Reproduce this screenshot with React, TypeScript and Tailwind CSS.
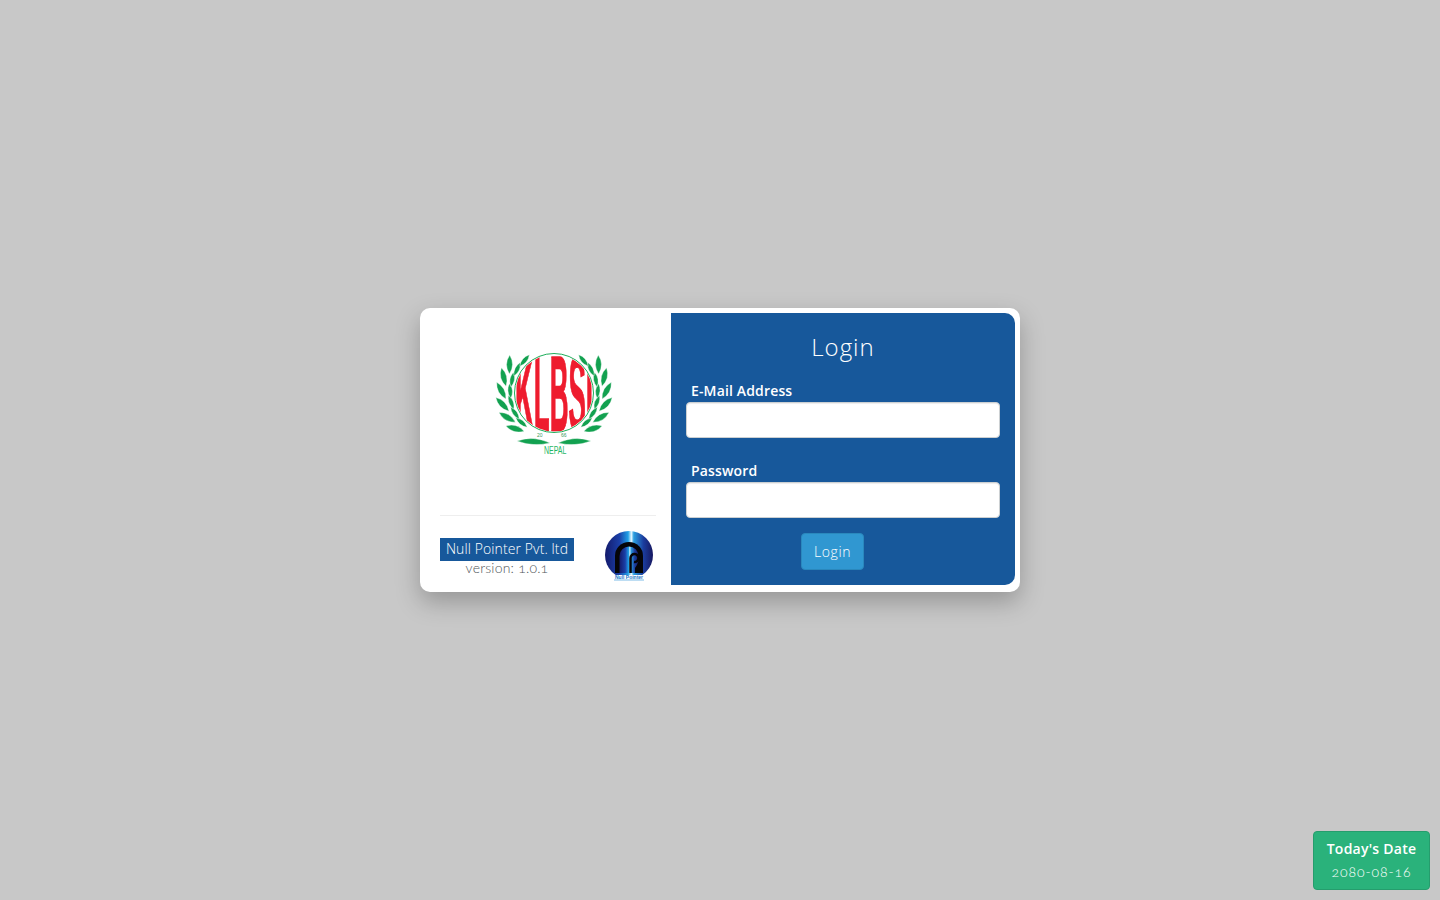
import React from 'react';

// laurel leaves of one branch, mirrored for the other side
const leaf = (x: number, y: number, deg: number, len: number, wid: number) => {
  const r = (deg * Math.PI) / 180;
  const ex = x + Math.cos(r) * len;
  const ey = y + Math.sin(r) * len;
  const mx = (x + ex) / 2;
  const my = (y + ey) / 2;
  const nx = -Math.sin(r) * wid;
  const ny = Math.cos(r) * wid;
  return `M${x.toFixed(1)} ${y.toFixed(1)}Q${(mx + nx).toFixed(1)} ${(my + ny).toFixed(1)} ${ex.toFixed(1)} ${ey.toFixed(1)}Q${(mx - nx).toFixed(1)} ${(my - ny).toFixed(1)} ${x.toFixed(1)} ${y.toFixed(1)}Z`;
};

const branch = () => {
  const cx = 554;
  const cy = 393;
  const out: string[] = [];
  for (let a = 38; a <= 130; a += 15) {
    const t = ((90 + a) * Math.PI) / 180;
    const tangent = 90 + a + 90;
    if (a <= 115) {
      const ox = cx + Math.cos(t) * 48.5;
      const oy = cy + Math.sin(t) * 48.5;
      out.push(leaf(ox, oy, tangent - 22, 19, 6));
    }
    const ix = cx + Math.cos(t) * 43.5;
    const iy = cy + Math.sin(t) * 43.5;
    out.push(leaf(ix, iy, tangent + 2, 15, 4.5));
  }
  return out;
};

const KlbsiLogo = () => {
  const leaves = branch();
  return (
    <svg viewBox="490 345 130 115" className="w-[130px] h-[115px]">
      <defs>
        <clipPath id="seal">
          <circle cx="554" cy="393" r="38.5" />
        </clipPath>
      </defs>
      <g clipPath="url(#seal)">
        <text
          transform="translate(515 431) scale(0.241 1)"
          fill="#ee1c2e"
          stroke="#ee1c2e"
          strokeWidth="1.500"
          fontFamily="'Liberation Sans', sans-serif"
          fontWeight="700"
          fontSize="108"
        >
          KLBSI
        </text>
      </g>
      <circle cx="554" cy="393" r="39.5" fill="none" stroke="#1fae5b" strokeWidth="1" />
      <g fill="#12a150" stroke="#ffffff" strokeWidth="0.4">
        {leaves.map((d, i) => (
          <path key={i} d={d} />
        ))}
        <g transform="translate(1108 0) scale(-1 1)">
          {leaves.map((d, i) => (
            <path key={i} d={d} />
          ))}
        </g>
        <path d="M517 441Q533 435 550 443Q533 447 517 441Z" />
        <path d="M591 441Q575 435 558 443Q575 447 591 441Z" />
      </g>
      <text x="537" y="437" fill="#3a9a5c" fontSize="5" fontFamily="'Liberation Sans', sans-serif">
        20
      </text>
      <text x="561" y="437" fill="#3a9a5c" fontSize="5" fontFamily="'Liberation Sans', sans-serif">
        66
      </text>
      <text
        transform="translate(544 454) scale(0.7 1)"
        fill="#1fb765"
        fontSize="10"
        fontFamily="'Liberation Sans', sans-serif"
      >
        NEPAL
      </text>
    </svg>
  );
};

const NullPointerLogo = () => (
  <svg viewBox="0 0 52 54" className="w-[52px] h-[54px]">
    <defs>
      <linearGradient id="np" x1="0" x2="1" y1="0" y2="0">
        <stop offset="0" stopColor="#141a6b" />
        <stop offset="0.3" stopColor="#1a3fa8" />
        <stop offset="0.48" stopColor="#1f9fe6" />
        <stop offset="0.55" stopColor="#e4f8ff" />
        <stop offset="0.6" stopColor="#2a9fe0" />
        <stop offset="0.8" stopColor="#1b3d9e" />
        <stop offset="1" stopColor="#17175f" />
      </linearGradient>
    </defs>
    <circle cx="26" cy="24" r="24" fill="url(#np)" />
    <path d="M12 42V25A14 14 0 0 1 40 25V42Z" fill="#050508" />
    <path d="M16.500 42V25A9.500 9.500 0 0 1 35.500 25V30Q34 35 32 37V42Z" fill="url(#np)" />
    <path d="M27.500 42V27A4 4 0 1 1 31 31" fill="none" stroke="#050508" strokeWidth="2.500" />
    <rect x="0" y="44" width="52" height="10" fill="#ffffff" />
    <text
      x="26"
      y="47.500"
      textAnchor="middle"
      fill="#1f78c8"
      fontSize="5"
      fontWeight="700"
      fontFamily="'Liberation Sans', sans-serif"
    >
      Null Pointer
    </text>
    <rect x="11" y="48.500" width="30" height="1" fill="#7cbce8" />
  </svg>
);

const App = () => {
  return (
    <div className="min-h-screen bg-[#c8c8c8] flex items-center justify-center font-['Open_Sans',sans-serif] text-[14px]">
      <div className="w-[600px] h-[284px] bg-white rounded-[10px] shadow-[0_10px_25px_rgba(0,0,0,0.25)] pt-[5px] pl-[5px] pr-[5px] pb-[7px] flex">
        <div className="w-[246px] px-[15px] flex flex-col">
          <div className="h-[202px] shrink-0 pt-[32px] pl-[50px]">
            <KlbsiLogo />
          </div>
          <div className="h-px bg-[#eeeeee]" />
          <div className="flex justify-between pt-[15px]">
            <div className="mt-[7px] flex flex-col items-center">
              <span className="bg-[#17589b] text-white font-light h-[23px] leading-[22px] w-[134px] text-center whitespace-nowrap tracking-[0.1px]">
                Null Pointer Pvt. ltd
              </span>
              <span className="font-['Lato',sans-serif] oldstyle-nums text-[#50565a] font-light leading-[13px] tracking-[0.2px]">
                version: 1.0.1
              </span>
            </div>
            <div className="mr-[1px]">
              <NullPointerLogo />
            </div>
          </div>
        </div>
        <div className="flex-1 bg-[#17589b] rounded-r-[10px] px-[15px] pt-[19px] text-white">
          <h2 className="text-[24px] font-light text-center leading-[29px] tracking-[1px]">Login</h2>
          <form>
            <label className="block mt-[20px] pl-[5px] font-semibold leading-[20px] h-[21px] tracking-[0.15px]">
              E-Mail Address
            </label>
            <input
              type="email"
              className="block w-full h-[36px] bg-white rounded-[4px] border border-[#ccd0d2] shadow-[inset_0_1px_1px_rgba(0,0,0,0.075)]"
            />
            <label className="block mt-[23px] pl-[5px] font-semibold leading-[20px] h-[21px] tracking-[0.15px]">
              Password
            </label>
            <input
              type="password"
              className="block w-full h-[36px] bg-white rounded-[4px] border border-[#ccd0d2] shadow-[inset_0_1px_1px_rgba(0,0,0,0.075)]"
            />
            <div className="mt-[15px] pl-[115px]">
              <button
                type="button"
                className="w-[63px] h-[37px] bg-[#3097d1] border border-[#2a88bd] rounded-[4px] text-white font-light tracking-[0.6px]"
              >
                Login
              </button>
            </div>
          </form>
        </div>
      </div>
      <div className="fixed right-[10px] bottom-[10px] w-[117px] h-[59px] bg-[#2ab27b] border border-[#259d6d] rounded-[4px] text-white text-center pt-[7px]">
        <div className="font-semibold leading-[20px] tracking-[0.25px]">Today's Date</div>
        <div className="font-['Lato',sans-serif] oldstyle-nums font-light leading-[20px] mt-[3px] tracking-[0.9px]">
          2080-08-16
        </div>
      </div>
    </div>
  );
};

export default App;
